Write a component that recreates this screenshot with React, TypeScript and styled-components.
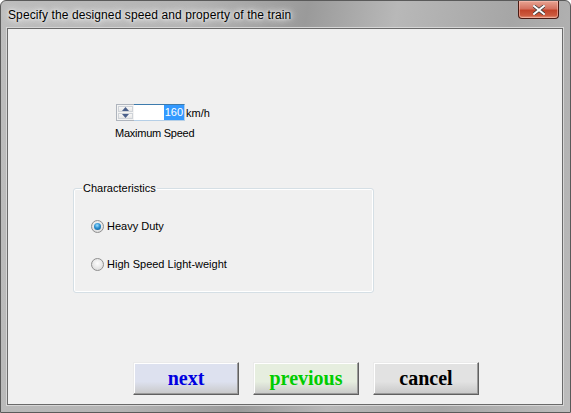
import React from "react";
import styled, { createGlobalStyle } from "styled-components";

const GlobalStyle = createGlobalStyle`
  html, body {
    margin: 0;
    padding: 0;
    background: #ffffff;
  }
  #root {
    width: 571px;
    height: 413px;
  }
`;

const Window = styled.div`
  width: 571px;
  height: 413px;
  box-sizing: border-box;
  display: flex;
  flex-direction: column;
  border: 1px solid #5a5a5a;
  border-radius: 6px 6px 0 0;
  background: linear-gradient(
    100deg,
    #bdbdbd 0%,
    #b4b4b4 30%,
    #9a9a9a 48%,
    #b8b8b8 62%,
    #a6a6a6 80%,
    #bcbcbc 100%
  );
  font-family: "Liberation Sans", Arial, sans-serif;
`;

const TitleBar = styled.div`
  height: 27px;
  display: flex;
  align-items: flex-start;
  justify-content: space-between;
  padding: 0 11px 0 7px;
`;

const Title = styled.span`
  margin-top: 7px;
  font-size: 12px;
  color: #000;
  letter-spacing: 0.1px;
  text-shadow: 0 0 6px #f4f4f4, 0 0 10px #eeeeee, 0 0 3px #ffffff;
`;

const CloseButton = styled.div`
  width: 41px;
  height: 18px;
  box-sizing: border-box;
  border: 1px solid #4a1a12;
  border-top: none;
  border-radius: 0 0 4px 4px;
  background: linear-gradient(
    180deg,
    #e8a493 0%,
    #d47260 45%,
    #c2442a 55%,
    #cc5a3e 85%,
    #e39a80 100%
  );
  box-shadow: inset 0 0 0 1px rgba(255, 200, 190, 0.5);
  display: flex;
  align-items: center;
  justify-content: center;
`;

const Client = styled.div`
  flex: 1;
  margin: 0 7px 7px 6px;
  border: 1px solid #6a6a6a;
  box-shadow: 0 0 0 1px #d6d6d6;
  background: #f0f0f0;
  display: flex;
  flex-direction: column;
  font-size: 11px;
  color: #000;
`;

const SpeedBlock = styled.div`
  margin: 75px 0 0 108px;
  display: flex;
  flex-direction: column;
  gap: 6px;
`;

const SpinRow = styled.div`
  display: flex;
  align-items: center;
`;

const SpinButtons = styled.div`
  width: 18px;
  height: 17px;
  box-sizing: border-box;
  border: 1px solid #aeb4bd;
  border-right: none;
  background: #f3f3f3;
  display: flex;
  flex-direction: column;
  padding: 1px;
  gap: 1px;
`;

const SpinArrow = styled.div`
  flex: 1;
  border: 1px solid #cfd3d8;
  background: linear-gradient(#f7f7f7, #e6e6e6);
  display: flex;
  align-items: center;
  justify-content: center;
`;

const SpinInput = styled.div`
  width: 51px;
  height: 17px;
  box-sizing: border-box;
  border-top: 1px solid #3d7bad;
  border-right: 1px solid #b5cfe7;
  border-bottom: 1px solid #b5cfe7;
  background: #fff;
  display: flex;
  align-items: center;
  justify-content: flex-end;
`;

const Selected = styled.span`
  background: #3399ff;
  color: #fff;
  padding: 1px;
  line-height: 13px;
`;

const Unit = styled.span`
  margin-left: 1px;
`;

const Caption = styled.span`
  margin-left: -1px;
  letter-spacing: -0.25px;
`;

const GroupBox = styled.fieldset`
  margin: 43px 0 0 65px;
  width: 301px;
  height: 111px;
  box-sizing: border-box;
  border: 1px solid #d5dfe5;
  border-radius: 3px;
  box-shadow: inset 0 0 0 1px #ffffff;
  padding: 25px 0 0 17px;
  display: flex;
  flex-direction: column;
  gap: 24px;
`;

const Legend = styled.legend`
  padding: 0 1px;
  margin-left: -9px;
  font-size: 11px;
`;

const RadioRow = styled.label`
  display: flex;
  align-items: center;
  gap: 3px;
  height: 14px;
`;

const RadioCircle = styled.span<{ $checked?: boolean }>`
  width: 13px;
  height: 13px;
  box-sizing: border-box;
  border-radius: 50%;
  border: 1px solid #8f8f8f;
  background: radial-gradient(circle at 50% 40%, #fdfdfd 0%, #dcdcdc 80%);
  display: flex;
  align-items: center;
  justify-content: center;

  &::after {
    content: "";
    display: ${(p) => (p.$checked ? "block" : "none")};
    width: 7px;
    height: 7px;
    border-radius: 50%;
    background: radial-gradient(circle at 45% 35%, #9fe0ff 0%, #2a8fd0 45%, #0b4f87 100%);
  }
`;

const ButtonRow = styled.div`
  margin-top: auto;
  margin-bottom: 9px;
  padding-left: 125px;
  display: flex;
  gap: 14px;
`;

const DialogButton = styled.button<{ $color: string; $bg: string }>`
  width: 106px;
  height: 33px;
  box-sizing: border-box;
  border: 1px solid;
  border-color: #eaeaea #606060 #606060 #eaeaea;
  box-shadow: inset -1px -1px 0 #9a9a9a, inset 1px 1px 0 #ffffff;
  background: linear-gradient(180deg, ${(p) => p.$bg} 0%, ${(p) => p.$bg} 60%, #c8c8c8 100%);
  color: ${(p) => p.$color};
  font-family: "Liberation Serif", "Times New Roman", serif;
  font-weight: bold;
  font-size: 20px;
  padding: 0;
  cursor: pointer;
`;

export default function App() {
  return (
    <>
      <GlobalStyle />
      <Window>
        <TitleBar>
          <Title>Specify the designed speed and property of the train</Title>
          <CloseButton>
            <svg width="12" height="10" viewBox="0 0 12 10">
              <path
                d="M1 1 L11 9 M11 1 L1 9"
                stroke="#3a3a3a"
                strokeWidth="3.4"
                strokeLinecap="square"
              />
              <path
                d="M1 1 L11 9 M11 1 L1 9"
                stroke="#ffffff"
                strokeWidth="2"
                strokeLinecap="square"
              />
            </svg>
          </CloseButton>
        </TitleBar>
        <Client>
          <SpeedBlock>
            <SpinRow>
              <SpinButtons>
                <SpinArrow>
                  <svg width="7" height="4" viewBox="0 0 7 4">
                    <path d="M0 4 L3.5 0 L7 4 Z" fill="#4a5f8a" />
                  </svg>
                </SpinArrow>
                <SpinArrow>
                  <svg width="7" height="4" viewBox="0 0 7 4">
                    <path d="M0 0 L3.5 4 L7 0 Z" fill="#4a5f8a" />
                  </svg>
                </SpinArrow>
              </SpinButtons>
              <SpinInput>
                <Selected>160</Selected>
              </SpinInput>
              <Unit>km/h</Unit>
            </SpinRow>
            <Caption>Maximum Speed</Caption>
          </SpeedBlock>
          <GroupBox>
            <Legend>Characteristics</Legend>
            <RadioRow>
              <RadioCircle $checked />
              Heavy Duty
            </RadioRow>
            <RadioRow>
              <RadioCircle />
              High Speed Light-weight
            </RadioRow>
          </GroupBox>
          <ButtonRow>
            <DialogButton $color="#0000e0" $bg="#dde1ef">
              next
            </DialogButton>
            <DialogButton $color="#00cc00" $bg="#e6eedf">
              previous
            </DialogButton>
            <DialogButton $color="#000000" $bg="#e2e2e2">
              cancel
            </DialogButton>
          </ButtonRow>
        </Client>
      </Window>
    </>
  );
}
